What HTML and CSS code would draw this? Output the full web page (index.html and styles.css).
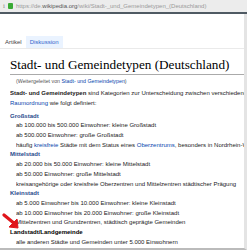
FILE: index.html
```html
<!DOCTYPE html>
<html lang="de">
<head>
    <meta charset="UTF-8">
    <title>Stadt- und Gemeindetypen (Deutschland)</title>
    <link rel="stylesheet" href="styles.css">
</head>
<body>
<div class="urlbar">
    <span class="info">i</span>
    <span class="lock"></span>
    <span class="url">https://de.<b>wikipedia.org</b>/wiki/Stadt-_und_Gemeindetypen_(Deutschland)</span>
</div>
<div class="page">
    <div class="tabs">
        <span class="tab">Artikel</span>
        <span class="tab active">Diskussion</span>
    </div>
    <div class="content">
        <h1>Stadt- und Gemeindetypen (Deutschland)</h1>
        <p class="redirect">(Weitergeleitet von <a>Stadt- und Gemeindetypen</a>)</p>
        <p class="intro"><b>Stadt- und Gemeindetypen</b> sind Kategorien zur Unterscheidung zwischen verschiedenen<br><a>Raumordnung</a> wie folgt definiert:</p>
        <dl>
            <dt class="blue">Großstadt</dt>
            <dd>ab 100.000 bis 500.000 Einwohner: kleine Großstadt</dd>
            <dd>ab 500.000 Einwohner: große Großstadt</dd>
            <dd>häufig <a>kreisfreie</a> Städte mit dem Status eines <a>Oberzentrums</a>, besonders in Nordrhein-Westfalen</dd>
            <dt class="blue">Mittelstadt</dt>
            <dd>ab 20.000 bis 50.000 Einwohner: kleine Mittelstadt</dd>
            <dd>ab 50.000 Einwohner: große Mittelstadt</dd>
            <dd>kreisangehörige oder kreisfreie Oberzentren und Mittelzentren städtischer Prägung</dd>
            <dt class="blue">Kleinstadt</dt>
            <dd>ab 5.000 Einwohner bis 10.000 Einwohner: kleine Kleinstadt</dd>
            <dd>ab 10.000 Einwohner bis 20.000 Einwohner: große Kleinstadt</dd>
            <dd>Mittelzentren und Grundzentren, städtisch geprägte Gemeinden</dd>
            <dt>Landstadt/Landgemeinde</dt>
            <dd>alle anderen Städte und Gemeinden unter 5.000 Einwohnern</dd>
        </dl>
    </div>
    <svg class="arrow" width="18" height="18" viewBox="0 0 18 18">
        <path d="M2 3 L13 12" stroke="#e0151b" stroke-width="3.2" stroke-linecap="round"/>
        <path d="M7 15 L16 16 L15 7 Z" fill="#e0151b" stroke="#e0151b" stroke-width="1" stroke-linejoin="round"/>
    </svg>
</div>
</body>
</html>
```

FILE: styles.css
```css
body {
    margin: 0;
    font-family: "Liberation Sans", Arial, sans-serif;
    background-color: #fff;
    width: 247px;
    height: 250px;
    overflow: hidden;
}

.urlbar {
    height: 12px;
    display: flex;
    align-items: center;
    gap: 3px;
    padding-left: 3px;
    background-color: #ececec;
    border-bottom: 2px solid #4f5a63;
    font-size: 6px;
    white-space: nowrap;
    overflow: hidden;
}

.info {
    color: #888;
    font-family: "Liberation Serif", serif;
    font-size: 7px;
}

.lock {
    width: 5px;
    height: 6px;
    background-color: #3aaa35;
    border-radius: 1px;
}

.url {
    color: #9a9a9a;
}

.url b {
    color: #555;
    font-weight: normal;
}

.page {
    position: relative;
    height: 236px;
    border-right: 3px solid #e4e4e4;
    border-bottom: 2px solid #bbb;
    box-sizing: border-box;
    overflow: hidden;
}

.tabs {
    display: flex;
    gap: 2px;
    padding: 22px 0 0 4px;
    font-size: 6px;
    border-bottom: 1px solid #eaeaea;
}

.tab {
    color: #444;
    padding: 3px 2px 3px 1px;
}

.tab.active {
    color: #3366cc;
    background-color: #eaf3ff;
    padding: 3px 4px;
}

.content {
    padding: 6px 0 0 10px;
    font-size: 6px;
    color: #222;
}

h1 {
    margin: 0 0 3px 0;
    font-family: "Liberation Serif", "Times New Roman", serif;
    font-weight: normal;
    font-size: 13.2px;
    line-height: 19px;
    color: #000;
    border-bottom: 1px solid #aaa;
    white-space: nowrap;
}

a {
    color: #0645ad;
}

.redirect {
    margin: 0 0 5px 6px;
    font-size: 5.3px;
    color: #555;
}

.intro {
    margin: 0 0 3px 0;
    line-height: 9.8px;
    white-space: nowrap;
    overflow: hidden;
}

dl {
    margin: 0;
    line-height: 9.7px;
}

dt {
    font-weight: bold;
    color: #000;
}

dt.blue {
    color: #2a4b8d;
}

dd {
    margin-left: 6px;
    white-space: nowrap;
    overflow: hidden;
}

.arrow {
    position: absolute;
    left: 2px;
    top: 198px;
}
```
